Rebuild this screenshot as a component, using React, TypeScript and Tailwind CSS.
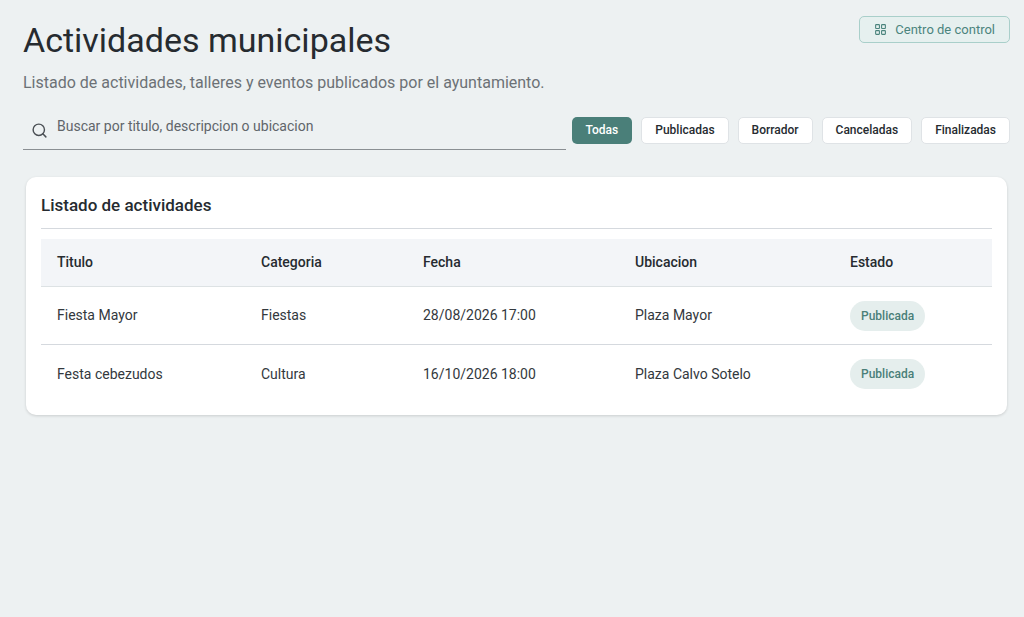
import React from 'react';
import { Search, LayoutGrid } from 'lucide-react';

const filters = ['Todas', 'Publicadas', 'Borrador', 'Canceladas', 'Finalizadas'];

const rows = [
  { titulo: 'Fiesta Mayor', categoria: 'Fiestas', fecha: '28/08/2026 17:00', ubicacion: 'Plaza Mayor' },
  { titulo: 'Festa cebezudos', categoria: 'Cultura', fecha: '16/10/2026 18:00', ubicacion: 'Plaza Calvo Sotelo' },
];

const App: React.FC = () => {
  return (
    <div className="min-h-[617px] bg-[#edf1f2] px-[23px] pt-4 text-[#262b30]" style={{ fontFamily: 'Roboto, "Liberation Sans", sans-serif' }}>
      <div className="flex justify-between items-start">
        <h1 className="text-[34px] leading-[40px] mt-[4px] font-normal">Actividades municipales</h1>
        <button className="h-[27px] px-[14px] flex items-center gap-2 rounded-[5px] border border-[#a9cfca] bg-[#e6f0ef] text-[#4b847d] text-[13px] mr-[-9px]">
          <LayoutGrid size={13} />
          Centro de control
        </button>
      </div>
      <p className="text-[16px] text-[#6c7176] mt-[11px]">Listado de actividades, talleres y eventos publicados por el ayuntamiento.</p>

      {/* Search + filters */}
      <div className="flex items-center mt-[17px] mr-[-9px]">
        <div className="w-[543px] h-[38px] border-b border-[#8a8f93] flex items-center gap-[9px] pl-[8px]">
          <Search size={17} className="text-[#4a4f54]" />
          <span className="text-[14px] text-[#60656a] -mt-[8px]">Buscar por titulo, descripcion o ubicacion</span>
        </div>
        <div className="flex gap-[9px] ml-auto -mt-[2px]">
          {filters.map((f) => (
            <button
              key={f}
              className={`h-[27px] px-[13px] rounded-[5px] text-[12px] font-medium ${
                f === 'Todas' ? 'bg-[#4a7f79] text-white px-[14px]' : 'bg-white text-[#262b30] border border-[#dfe3e6]'
              }`}
            >
              {f}
            </button>
          ))}
        </div>
      </div>

      {/* Card */}
      <div className="mt-[27px] ml-[3px] mr-[-6px] bg-white rounded-[10px] shadow-[0_1px_3px_rgba(0,0,0,0.15)] px-[15px] pt-[18px] pb-[12px]">
        <h2 className="text-[17px] font-medium leading-[20px]">Listado de actividades</h2>
        <div className="border-t border-[#d5d9de] mt-[13px]" />
        <div className="mt-[10px] text-[14px]">
          <div className="grid grid-cols-[204px_162px_212px_215px_1fr] bg-[#f3f5f8] h-[48px] items-center pl-[16px] border-b border-[#dde2e4] font-medium">
            <span>Titulo</span>
            <span>Categoria</span>
            <span>Fecha</span>
            <span>Ubicacion</span>
            <span>Estado</span>
          </div>
          {rows.map((r, i) => (
            <div
              key={r.titulo}
              className={`grid grid-cols-[204px_162px_212px_215px_1fr] h-[58px] items-center pl-[16px] text-[#33383d] ${
                i === 0 ? 'border-b border-[#d5d9de]' : ''
              }`}
            >
              <span>{r.titulo}</span>
              <span>{r.categoria}</span>
              <span>{r.fecha}</span>
              <span>{r.ubicacion}</span>
              <span>
                <span className="inline-flex items-center h-[30px] px-[11px] rounded-full bg-[#e5eeed] text-[#4a7f79] text-[12px] font-medium">
                  Publicada
                </span>
              </span>
            </div>
          ))}
        </div>
      </div>
    </div>
  );
};

export default App;
